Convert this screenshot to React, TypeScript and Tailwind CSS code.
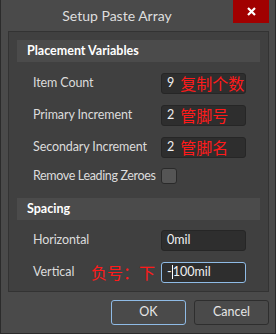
import React from 'react';

const font = { fontFamily: 'Lato, "Noto Sans", "Liberation Sans", sans-serif' };
const cjk = { fontFamily: '"Noto Sans CJK SC", "Noto Sans", sans-serif' };

function Header({ title }: { title: string }) {
  return (
    <div className="h-[22px] bg-[#4b4b4b] flex items-center pl-[10px] text-[12.5px] font-bold text-white">
      {title}
    </div>
  );
}

function Field({ label, value, note }: { label: string; value: string; note?: string }) {
  return (
    <div className="h-[32px] flex items-center pl-[16px]">
      <div className="w-[128px] text-[12.5px] tracking-[-0.1px] text-[#dcdcdc] whitespace-nowrap">{label}</div>
      <div className="w-[85px] h-[21px] rounded-[3px] bg-[#2e2e2e] border border-[#262626] flex items-center pl-[5px] text-[12.5px] text-[#f0f0f0] whitespace-nowrap">
        <span>{value}</span>
        {note && (
          <span className="ml-[6px] text-[16px] leading-none text-[#ff1a1a]" style={cjk}>
            {note}
          </span>
        )}
      </div>
    </div>
  );
}

export default function App() {
  return (
    <div
      className="w-[276px] h-[334px] bg-[#4a4a4a] border-x border-b border-[#2b2b2b] flex flex-col"
      style={font}
    >
      <div className="relative h-[31px] flex items-center">
        <div className="w-[232px] text-center text-[14px] text-[#dedede] -mt-[1px]">Setup Paste Array</div>
        <div className="absolute right-[6px] top-0 w-[36px] h-[23px] bg-[#a10000] flex items-center justify-center">
          <svg width="9" height="9" viewBox="0 0 9 9">
            <path d="M1 1L8 8M8 1L1 8" stroke="white" strokeWidth="2.2" />
          </svg>
        </div>
      </div>

      <div className="ml-[7px] w-[261px] h-[261px] bg-[#404040] border border-[#333333] px-[8px] pt-[8px] flex flex-col">
        <Header title="Placement Variables" />
        <div className="mt-[5px]">
          <Field label="Item Count" value="9" note="复制个数" />
          <Field label="Primary Increment" value="2" note="管脚号" />
          <Field label="Secondary Increment" value="2" note="管脚名" />
          <div className="h-[26px] flex items-center pl-[16px]">
            <div className="w-[128px] text-[12.5px] tracking-[-0.35px] text-[#dcdcdc] whitespace-nowrap">Remove Leading Zeroes</div>
            <div className="w-[16px] h-[16px] rounded-[3px] bg-[#555555] border border-[#2a2a2a]" />
          </div>
        </div>
        <div className="mt-[9px]">
          <Header title="Spacing" />
        </div>
        <div className="mt-[4px]">
          <Field label="Horizontal" value="0mil" />
          <div className="h-[32px] flex items-center pl-[16px]">
            <div className="w-[58px] text-[12.5px] text-[#dcdcdc]">Vertical</div>
            <div className="w-[70px] text-[16px] leading-none text-[#ff1a1a] whitespace-nowrap" style={cjk}>负号：下</div>
            <div className="w-[85px] h-[21px] rounded-[3px] bg-[#2e2e2e] border border-[#8fbbe6] flex items-center pl-[5px] text-[12.5px] text-[#f0f0f0]">
              <span>-</span>
              <span className="w-[1px] h-[14px] bg-white" />
              <span>100mil</span>
            </div>
          </div>
        </div>
      </div>

      <div className="flex justify-end gap-[8px] pr-[6px] mt-[8px]">
        <button className="w-[75px] h-[25px] rounded-[3px] bg-[#4a4a4a] border border-[#8fbbe6] text-[12.5px] text-[#e6e6e6]">
          OK
        </button>
        <button className="w-[75px] h-[25px] rounded-[3px] bg-[#4a4a4a] border border-[#2e2e2e] text-[12.5px] text-[#e6e6e6]">
          Cancel
        </button>
      </div>
    </div>
  );
}
